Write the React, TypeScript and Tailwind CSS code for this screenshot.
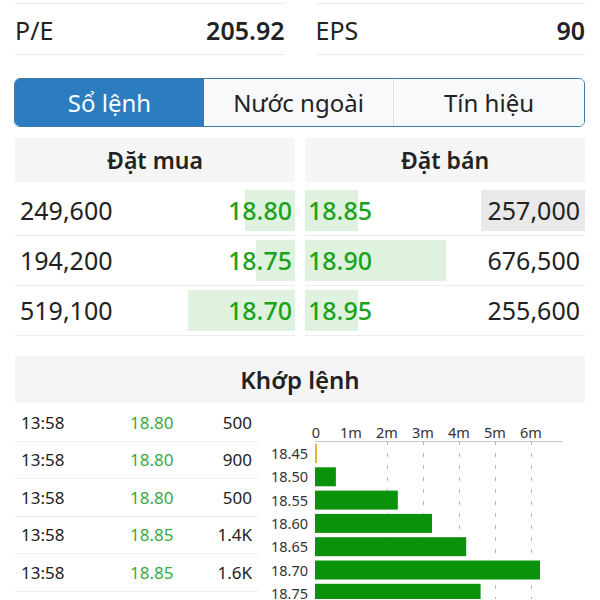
import React from 'react';

const font = { fontFamily: '"Noto Sans", Roboto, sans-serif' };

const bids = [
  { qty: '249,600', price: '18.80', w: 50 },
  { qty: '194,200', price: '18.75', w: 39 },
  { qty: '519,100', price: '18.70', w: 107 },
];

const asks = [
  { price: '18.85', qty: '257,000', w: 53, hl: true },
  { price: '18.90', qty: '676,500', w: 141, hl: false },
  { price: '18.95', qty: '255,600', w: 53, hl: false },
];

const trades = [
  { t: '13:58', p: '18.80', v: '500' },
  { t: '13:58', p: '18.80', v: '900' },
  { t: '13:58', p: '18.80', v: '500' },
  { t: '13:58', p: '18.85', v: '1.4K' },
  { t: '13:58', p: '18.85', v: '1.6K' },
];

// volume by price, in millions
const volumes = [
  { p: '18.45', v: 0.03 },
  { p: '18.50', v: 0.58 },
  { p: '18.55', v: 2.3 },
  { p: '18.60', v: 3.25 },
  { p: '18.65', v: 4.2 },
  { p: '18.70', v: 6.25 },
  { p: '18.75', v: 4.6 },
];

function VolumeChart() {
  const x0 = 53;
  const unit = 36;
  return (
    <svg width="323" height="196" className="block" style={font}>
      {[0, 1, 2, 3, 4, 5, 6].map((i) => (
        <text key={i} x={x0 + i * unit + (i === 0 ? 1 : 0)} y={35} fontSize="14.5" fill="#333" textAnchor="middle">
          {i === 0 ? '0' : `${i}m`}
        </text>
      ))}
      {[2, 3, 4, 5, 6].map((i) => (
        <line key={i} x1={x0 + i * unit + 0.5} x2={x0 + i * unit + 0.5} y1={38} y2={196} stroke="#b5b5b5" strokeDasharray="4 8" />
      ))}
      <line x1={x0} x2={301} y1={38.5} y2={38.5} stroke="#c8c8c8" />
      {volumes.map((b, i) => {
        const y = 41 + i * 23.3;
        const w = b.v * unit;
        return (
          <g key={b.p}>
            <text x={46} y={y + 15} fontSize="14.5" fill="#333" textAnchor="end">
              {b.p}
            </text>
            {i === 0 ? (
              <rect x={x0} y={y} width={2} height={19} fill="#e6b33a" />
            ) : (
              <rect x={x0} y={y} width={w} height={19} fill="#0a930a" />
            )}
          </g>
        );
      })}
    </svg>
  );
}

export default function App() {
  return (
    <div className="w-[600px] h-[600px] overflow-hidden bg-white px-[15px] text-[#222]" style={font}>
      {/* stats rows */}
      <div className="grid grid-cols-2 gap-x-[31px]">
        <div className="h-[4px] border-b border-[#ececec]" />
        <div className="h-[4px] border-b border-[#ececec]" />
        <div className="h-[51px] flex items-center justify-between border-b border-[#ececec] pt-[3px] text-[25px] leading-none">
          <span>P/E</span>
          <span className="font-semibold">205.92</span>
        </div>
        <div className="h-[51px] flex items-center justify-between border-b border-[#ececec] pt-[3px] text-[25px] leading-none">
          <span>EPS</span>
          <span className="font-semibold">90</span>
        </div>
      </div>

      {/* tabs */}
      <div className="mt-[23px] h-[49px] flex rounded-[6px] border border-[#3f7aa6] overflow-hidden text-[24px] leading-none -ml-px">
        <div className="w-[189px] flex items-center justify-center bg-[#2b7dc0] text-white">Sổ lệnh</div>
        <div className="w-[190px] flex items-center justify-center bg-[#f7f9fb] border-r border-[#dcdfe3]">Nước ngoài</div>
        <div className="flex-1 flex items-center justify-center bg-[#f7f9fb]">Tín hiệu</div>
      </div>

      {/* order book */}
      <div className="mt-[11px] grid grid-cols-2 gap-x-[10px]">
        <div className="h-[44px] flex items-center justify-center bg-[#f5f5f5] text-[23px] leading-none font-semibold">Đặt mua</div>
        <div className="h-[44px] flex items-center justify-center bg-[#f5f5f5] text-[23px] leading-none font-semibold">Đặt bán</div>
        <div className="mt-[4px] flex flex-col">
          {bids.map((r) => (
            <div key={r.price} className="h-[50px] flex items-center justify-between border-b border-[#eeeeee] py-[4px] text-[25px] leading-none">
              <span className="pl-[5px]">{r.qty}</span>
              <div className="relative h-full flex items-center justify-end">
                <div className="absolute right-0 top-0 h-full bg-[#dff1df]" style={{ width: r.w }} />
                <span className="relative pr-[3px] font-medium text-[#19a319]">{r.price}</span>
              </div>
            </div>
          ))}
        </div>
        <div className="mt-[4px] flex flex-col">
          {asks.map((r) => (
            <div key={r.price} className="h-[50px] flex items-center justify-between border-b border-[#eeeeee] py-[4px] text-[25px] leading-none">
              <div className="relative h-full flex items-center">
                <div className="absolute left-0 top-0 h-full bg-[#dff1df]" style={{ width: r.w }} />
                <span className="relative pl-[3px] font-medium text-[#19a319]">{r.price}</span>
              </div>
              <span className={`h-full flex items-center pl-[6px] pr-[5px] ${r.hl ? 'bg-[#e9e9e9]' : ''}`}>{r.qty}</span>
            </div>
          ))}
        </div>
      </div>

      {/* matched orders */}
      <div className="mt-[20px] h-[47px] flex items-center justify-center bg-[#f5f5f5] text-[24px] leading-none font-semibold">Khớp lệnh</div>
      <div className="flex pt-px">
        <div className="w-[243px] flex flex-col">
          {trades.map((r, i) => (
            <div key={i} className="h-[37.5px] flex items-center border-b border-[#eeeeee] text-[17px] leading-none">
              <span className="w-[115px] pl-[6px]">{r.t}</span>
              <span className="w-[60px] text-[#3aa83f]">{r.p}</span>
              <span className="flex-1 text-right pr-[6px]">{r.v}</span>
            </div>
          ))}
        </div>
        <div className="ml-[4px] -mt-px">
          <VolumeChart />
        </div>
      </div>
    </div>
  );
}
